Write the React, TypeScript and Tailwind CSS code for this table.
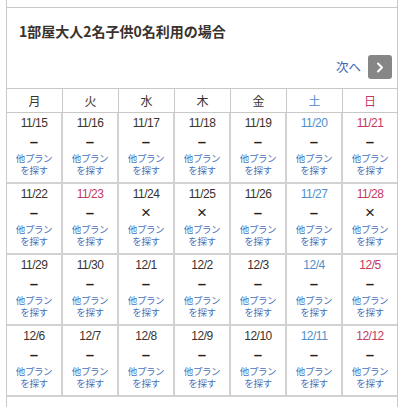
import React from 'react'

type Cell = { d: string; mark: '-' | 'x'; tone?: 'sat' | 'sun' }

const days = ['月', '火', '水', '木', '金', '土', '日']

const weeks: string[][] = [
    ['11/15', '11/16', '11/17', '11/18', '11/19', '11/20', '11/21'],
    ['11/22', '11/23', '11/24', '11/25', '11/26', '11/27', '11/28'],
    ['11/29', '11/30', '12/1', '12/2', '12/3', '12/4', '12/5'],
    ['12/6', '12/7', '12/8', '12/9', '12/10', '12/11', '12/12'],
]

const soldOut = ['11/24', '11/25', '11/28']
const holidays = ['11/23']

const rows: Cell[][] = weeks.map(w =>
    w.map((d, i) => ({
        d,
        mark: soldOut.includes(d) ? 'x' : '-',
        tone: i === 5 ? 'sat' : i === 6 || holidays.includes(d) ? 'sun' : undefined,
    }))
)

const toneClass = (tone?: 'sat' | 'sun') =>
    tone === 'sat' ? 'text-[#4f8fcc]' : tone === 'sun' ? 'text-[#c23a62]' : 'text-[#3a322d]'

export default function App() {
    return (
        <div className="w-[400px] h-[407px] overflow-hidden bg-white font-['Liberation_Sans','Noto_Sans_CJK_JP',sans-serif]">
            <div className="ml-[6px] w-[392px] h-full border-l border-r border-[#c8c8c8] pt-[7px]">
                <div className="border-t border-[#c8c8c8]">
                    {/* title */}
                    <div className="pl-[12px] pt-[13px]">
                        <h2 className="text-[14px] leading-[20px] font-bold text-[#3a322d] font-['Noto_Sans_CJK_JP',sans-serif]">
                            1部屋大人2名子供0名利用の場合
                        </h2>
                    </div>

                    {/* next */}
                    <div className="flex justify-end items-center gap-[7px] pr-[5px] mt-[14px] mb-[9px]">
                        <span className="text-[12.5px] leading-[16px] text-[#3f67b3] font-['Noto_Sans_CJK_JP',sans-serif]">次へ</span>
                        <button className="w-[24px] h-[24px] rounded-[3px] bg-[#868686] flex items-center justify-center">
                            <svg width="8" height="11" viewBox="0 0 8 11" fill="none">
                                <path d="M2 1.5 L6 5.5 L2 9.5" stroke="#fff" strokeWidth="2" strokeLinecap="round" strokeLinejoin="round" />
                            </svg>
                        </button>
                    </div>

                    {/* calendar */}
                    <div className="border-t border-[#c8c8c8]">
                        <div className="grid grid-cols-[repeat(6,56px)_1fr] border-b border-[#c8c8c8]">
                            {days.map((day, i) => (
                                <div
                                    key={day}
                                    className={`h-[23px] flex items-center justify-center text-[12px] font-['Noto_Sans_CJK_JP',sans-serif] ${i < 6 ? 'border-r border-[#c8c8c8]' : ''} ${toneClass(i === 5 ? 'sat' : i === 6 ? 'sun' : undefined)}`}
                                >
                                    {day}
                                </div>
                            ))}
                        </div>

                        {rows.map((row, r) => (
                            <div key={r} className="grid grid-cols-[repeat(6,56px)_1fr] border-b-2 border-[#d2d2d2]">
                                {row.map((c, i) => (
                                    <div
                                        key={c.d}
                                        className={`h-[69px] flex flex-col items-center pt-[1px] ${i < 6 ? 'border-r-2 border-[#d2d2d2]' : ''}`}
                                    >
                                        <span className={`text-[12px] leading-[18px] tracking-[-0.5px] ${toneClass(c.tone)}`}>{c.d}</span>
                                        {c.mark === 'x' ? (
                                            <span className="text-[17px] leading-[20px] text-[#222]">×</span>
                                        ) : (
                                            <span className="text-[15px] leading-[20px] font-bold text-[#222]">–</span>
                                        )}
                                        <a className="flex flex-col items-center text-[9.5px] tracking-[-0.4px] text-[#4a70b6] font-['Noto_Sans_CJK_JP',sans-serif]">
                                            <span className="block leading-[12px]">他プラン</span>
                                            <span className="block leading-[12px]">を探す</span>
                                        </a>
                                    </div>
                                ))}
                            </div>
                        ))}
                    </div>
                </div>
            </div>
        </div>
    )
}
